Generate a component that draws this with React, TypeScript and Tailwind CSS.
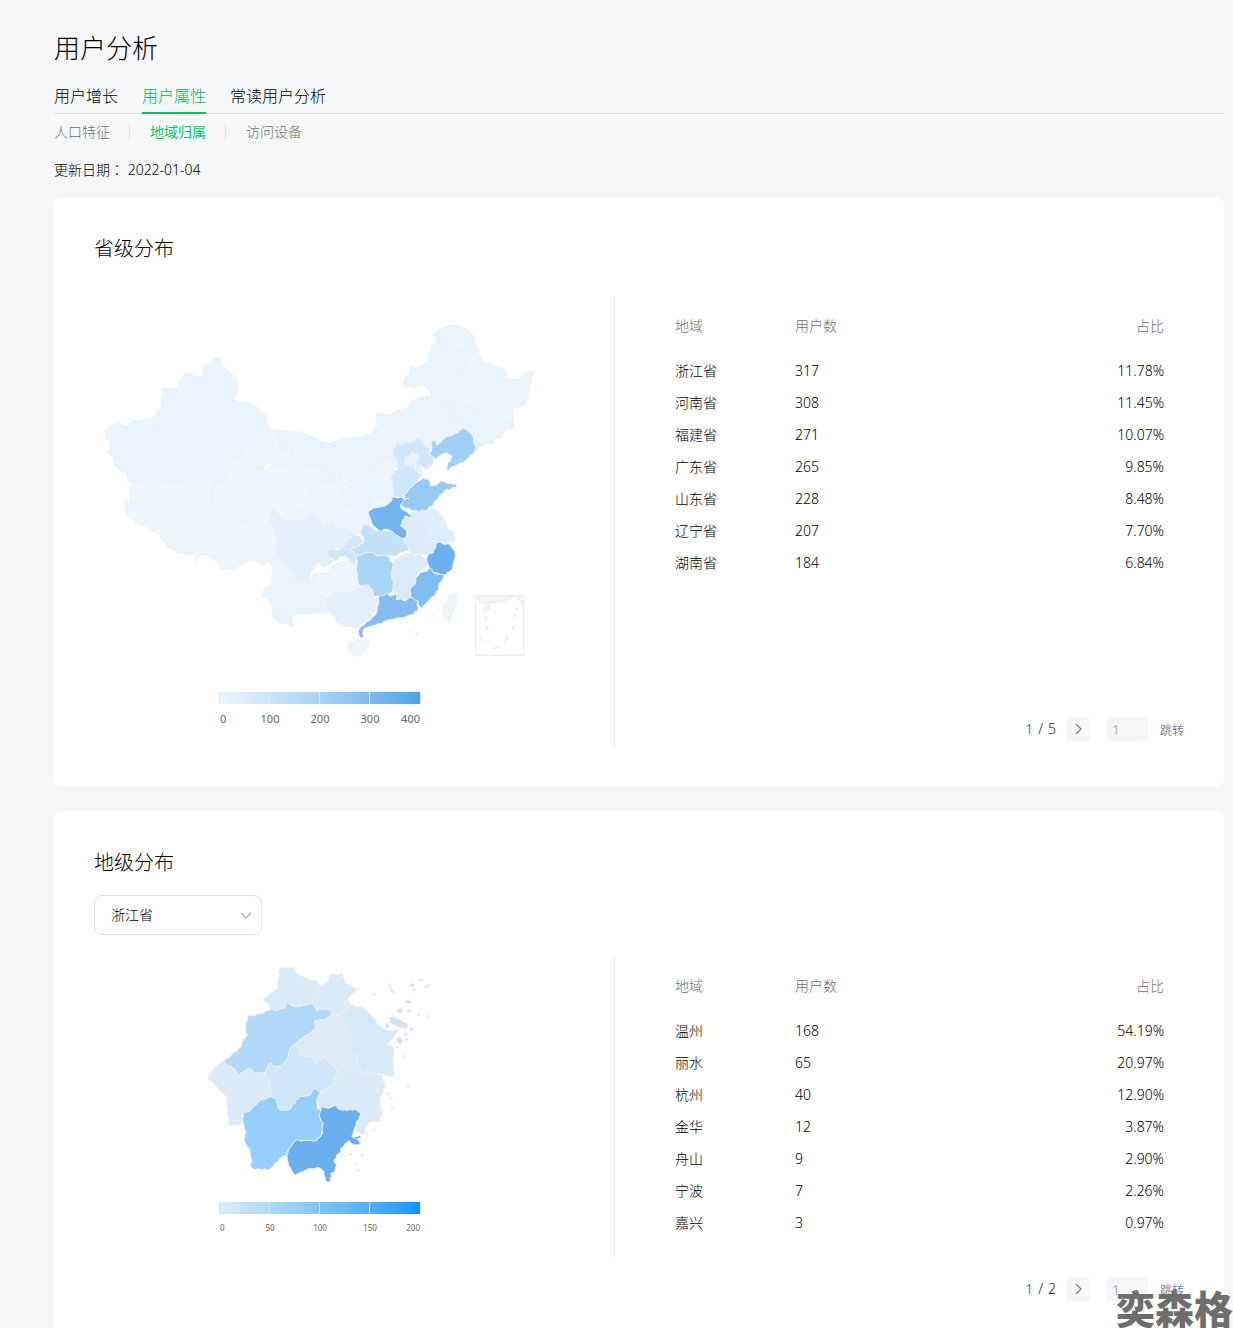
import { useState } from "react";

type Point = [number, number];
type Region = { name: string; fill: string; points: Point[] };

/* ---------- map geometry helpers ---------- */

// Each sheet of the country map is digitised from its own origin.
const SHEETS = {
  W: [0, 90],
  N: [645, 0],
  E: [645, 420],
  C: [435, 330],
} as const;

function trace(text: string): Point[] {
  let dx = 0;
  let dy = 0;
  const out: Point[] = [];
  for (const token of text.trim().split(/\s+/)) {
    if (token in SHEETS) {
      [dx, dy] = SHEETS[token as keyof typeof SHEETS];
    } else {
      const [x, y] = token.split(",").map(Number);
      out.push([x + dx, y + dy]);
    }
  }
  return out;
}

// Adds a small, repeatable irregularity along a border so that neighbours share it.
function borderPath(points: Point[]): string {
  const parts: string[] = [];
  points.forEach((a, i) => {
    const b = points[(i + 1) % points.length];
    const length = Math.hypot(b[0] - a[0], b[1] - a[1]);
    parts.push(`${a[0]},${a[1]}`);
    const steps = Math.min(5, Math.floor(length / 8));
    const forward = a[0] < b[0] || (a[0] === b[0] && a[1] < b[1]);
    const [p, q] = forward ? [a, b] : [b, a];
    const mids: string[] = [];
    for (let k = 1; k < steps; k++) {
      const t = k / steps;
      const seed = Math.sin(p[0] * 12.9 + p[1] * 78.2 + q[0] * 3.7 + k * 37.7) * 43758;
      const shift = (seed - Math.floor(seed) - 0.5) * 6;
      const x = p[0] + (q[0] - p[0]) * t - ((q[1] - p[1]) / length) * shift;
      const y = p[1] + (q[1] - p[1]) * t + ((q[0] - p[0]) / length) * shift;
      mids.push(`${x.toFixed(1)},${y.toFixed(1)}`);
    }
    parts.push(...(forward ? mids : mids.reverse()));
  });
  return `M${parts.join("L")}Z`;
}

const region = (name: string, fill: string, text: string): Region => ({ name, fill, points: trace(text) });

const CHINA: Region[] = [
  region("内蒙古", "#e8f3fc", "C 108,27 150,33 182,33 205,45 240,60 265,68 285,62 310,52 345,48 370,48 390,40 400,30 N 205,345 198,325 203,308 215,306 235,313 262,297 290,294 305,272 335,258 368,256 362,243 345,225 325,220 320,230 300,225 285,227 281,216 303,167 325,170 352,150 357,127 378,90 368,72 385,55 395,62 400,77 420,88 430,110 440,115 470,103 485,120 472,160 462,185 463,205 440,220 420,237 440,262 435,270 410,280 420,300 420,325 440,320 455,345 460,352 445,365 430,370 400,385 380,403 372,388 365,390 362,410 345,405 335,385 325,380 312,392 290,395 270,405 262,393 250,415 250,435 C 465,108 430,118 400,140 385,145 360,165 345,185 322,178 295,172 302,140 290,140 280,180 262,187 250,183 232,160 W 680,375 655,375 625,385 590,350 595,322 560,325 550,300 548,270"),
  region("甘肃省", "#eaf5fe", "W 525,262 548,270 550,300 560,325 595,322 590,350 625,385 655,375 680,375 C 232,160 250,183 262,187 280,180 315,185 340,205 343,220 330,252 295,252 298,262 285,285 270,315 248,318 238,300 210,275 190,300 170,300 150,290 150,150 90,125 W 500,385 475,375 450,362 430,354 438,340 442,322 455,315 475,300 495,290 518,283"),
  region("新疆", "#e9f4fe", "W 28,268 38,265 43,255 65,245 78,247 82,255 95,255 110,240 130,240 150,235 182,227 188,208 201,195 202,152 197,146 235,142 248,147 250,130 262,112 272,94 285,101 310,107 323,104 325,75 335,68 352,66 358,51 377,54 377,68 395,90 410,97 422,110 429,130 428,152 418,165 420,178 440,185 470,190 490,202 508,218 515,243 525,262 518,283 495,290 475,300 455,315 442,322 438,340 430,354 405,360 380,366 385,385 394,402 385,415 385,430 360,428 340,415 305,412 280,417 260,423 235,425 205,420 200,412 180,413 152,410 135,425 115,431 100,420 97,395 80,390 60,375 57,352 45,338 35,334 46,328 46,297 30,292"),
  region("西藏", "#edf5fd", "W 115,431 135,425 152,410 180,413 200,412 205,420 235,425 260,423 280,417 305,412 340,415 360,428 350,440 352,470 348,490 362,508 400,526 435,540 465,550 485,567 510,560 520,548 535,560 545,590 547,620 545,650 530,665 520,660 503,672 485,660 465,657 440,670 415,685 378,684 375,668 365,665 360,652 340,642 315,642 303,662 303,642 270,640 240,632 215,610 200,590 175,570 150,550 137,556 115,535 95,520 88,480 95,475 105,483 108,455 103,435"),
  region("青海省", "#edf5fd", "W 380,366 405,360 430,354 450,362 475,375 500,385 520,385 530,368 550,375 565,370 600,385 630,410 645,430 651,460 640,485 625,500 635,512 620,515 600,505 605,520 620,525 605,535 600,550 575,545 560,540 545,515 530,505 525,525 520,548 510,560 485,567 465,550 435,540 400,526 362,508 348,490 352,470 350,440 360,428 385,430 385,415 394,402 385,385"),
  region("宁夏", "#ebf5fe", "C 262,187 280,180 285,155 290,140 302,140 302,160 295,172 315,185 305,205 300,225 320,215 310,250 295,252 298,262 270,240 268,215"),
  region("陕西省", "#eaf4fe", "C 385,145 400,140 395,165 385,190 385,240 382,270 395,300 405,318 370,310 355,340 340,340 325,328 300,322 270,315 285,285 298,262 295,252 330,252 343,220 340,205 315,185 322,178 345,185 360,165"),
  region("山西省", "#e8f4fe", "C 400,140 430,118 465,108 470,125 463,150 455,165 460,190 457,227 455,240 438,253 410,260 384,272 385,240 385,190 395,165"),
  region("四川省", "#e3effb", "C 100,263 110,275 120,288 140,300 160,298 190,300 210,275 238,300 248,318 270,315 300,322 325,328 340,340 330,360 305,380 270,385 262,400 280,420 270,430 250,440 235,425 215,450 210,480 180,487 165,475 150,440 130,420 108,408 113,370 105,330 85,310 90,285"),
  region("云南省", "#e8f3fc", "C 95,415 108,408 130,420 150,440 165,475 180,487 210,480 225,455 235,465 218,475 235,490 230,510 245,525 265,540 258,555 270,575 250,572 235,575 215,578 190,580 160,580 155,595 160,615 150,612 135,605 118,607 100,590 98,560 80,530 65,530 70,510 95,485 98,450"),
  region("贵州省", "#eaf5fe", "C 235,490 218,475 225,460 260,455 270,445 285,428 300,425 320,418 340,420 350,440 352,470 355,490 370,495 340,508 320,520 300,512 280,518 265,530 245,525 230,510"),
  region("广西", "#e3f0fc", "C 245,525 265,530 280,518 300,512 320,520 340,508 370,495 392,490 398,505 400,528 412,535 410,560 395,585 375,605 355,618 320,617 290,605 280,585 270,575 258,555 265,540"),
  region("重庆市", "#cfe6fb", "C 340,340 360,345 370,360 345,378 332,385 350,400 345,435 330,420 320,405 305,405 285,420 262,400 270,385 295,388 310,375 330,355"),
  region("湖北省", "#c5e1f8", "C 370,310 385,312 400,325 430,330 450,328 465,340 490,350 505,370 505,390 480,395 465,405 440,405 410,405 395,393 375,395 350,405 345,398 332,385 345,378 370,365 372,350 362,340"),
  region("安徽省", "#dbebfa", "E 285,200 300,190 305,183 325,185 330,195 345,205 350,225 362,235 355,265 382,275 370,300 355,310 330,310 300,308 295,290 280,265 292,255 290,240 272,225 275,205"),
  region("江苏省", "#dcedfb", "E 305,178 325,172 345,182 365,175 380,178 395,195 405,210 415,235 430,245 432,258 415,260 412,275 385,275 355,268 350,255 362,235 350,225 345,205 330,195"),
  region("上海市", "#e3effb", "E 415,258 430,250 435,265 430,275 415,275"),
  region("河北省", "#cfe6fb", "N 262,393 270,405 290,395 312,392 325,380 335,385 345,405 362,410 358,428 372,445 365,465 350,475 335,460 335,490 328,500 E 320,95 300,110 283,130 278,140 247,135 250,110 243,75 N 262,475 262,450 250,435 250,415"),
  region("北京市", "#e6f2fc", "N 290,435 300,432 305,422 325,432 325,448 318,458 302,465 285,462 282,450"),
  region("天津市", "#e6f2fc", "N 315,458 332,465 335,485 325,490 312,475"),
  region("河南省", "#73b5f0", "C 384,272 410,260 438,253 455,240 457,227 490,232 495,240 480,258 497,270 517,285 510,290 495,285 482,315 500,330 500,350 485,352 465,340 450,328 415,328 400,315 392,295"),
  region("湖南省", "#aad4f6", "C 350,405 375,395 395,393 410,405 440,405 462,430 455,455 460,500 455,515 430,525 400,528 398,505 385,490 365,495 355,490 352,470 350,440"),
  region("江西省", "#dbebfa", "C 460,420 480,405 505,398 540,400 555,410 565,430 540,450 525,475 520,500 510,520 505,535 480,535 465,520 460,500 455,455 462,430"),
  region("山东省", "#96c9f3", "E 283,130 300,110 320,95 340,82 358,85 362,105 380,103 395,90 415,98 440,98 438,110 410,115 385,140 370,160 345,180 305,178 272,162 280,150 297,142 283,143"),
  region("辽宁省", "#a2cff5", "N 460,352 475,362 490,378 498,415 475,440 465,450 435,465 410,480 412,465 427,435 412,425 395,430 378,445 370,438 358,428 365,410 365,390 372,388 380,403 400,385 430,370 445,365"),
  region("吉林省", "#e8f3fc", "N 435,270 455,270 475,290 510,290 535,305 550,325 570,320 600,335 612,330 612,350 600,355 590,350 570,380 550,385 552,400 535,395 515,405 500,418 490,378 475,362 460,352 455,345 440,320 420,325 420,300 410,280"),
  region("黑龙江省", "#eaf5fe", "N 385,55 400,48 430,42 470,55 490,75 500,110 520,155 550,160 582,178 595,208 625,205 650,185 671,180 665,200 660,240 645,280 605,290 612,330 600,335 570,320 550,325 535,305 510,290 475,290 455,270 440,262 420,237 440,220 463,205 462,185 472,160 485,120 470,103 440,115 430,110 420,88 400,77 395,62"),
  region("广东省", "#83bdf1", "E 205,440 230,428 240,435 262,432 258,447 290,447 300,438 320,445 325,470 322,482 300,492 270,500 240,505 215,518 185,525 160,535 158,550 163,560 150,560 145,540 150,530 165,520 185,500 200,485 205,460"),
  region("福建省", "#81bdf2", "E 300,438 303,410 315,400 318,380 330,365 352,360 358,350 370,365 385,370 402,372 395,390 385,400 387,415 372,435 350,455 330,475 325,450"),
  region("浙江省", "#6db2ef", "E 382,275 390,273 402,280 415,278 435,300 432,330 428,350 405,372 390,370 370,365 358,350 350,325 355,310 370,305"),
  region("海南省", "#eaf5fe", "E 115,590 118,575 145,565 175,567 175,580 155,610 140,615 118,605"),
  region("台湾省", "#eaf5fc", "E 402,460 415,440 432,426 442,430 438,460 425,490 418,515 400,490 398,475"),
];

const ZHEJIANG: Region[] = [
  region("湖州", "#daebf7", "240,55 280,53 290,70 325,90 350,90 360,108 340,140 338,160 300,170 285,170 258,155 255,175 210,182 205,160 188,150 215,130 232,115 235,90"),
  region("嘉兴", "#daebf7", "360,108 385,95 392,75 428,70 435,98 470,115 465,128 443,145 450,165 440,185 420,192 395,193 395,178 360,178 350,185 338,160 340,140"),
  region("杭州", "#b0daf8", "142,195 165,198 205,182 255,175 258,155 285,170 300,170 338,160 350,185 360,178 395,178 393,195 375,210 345,212 347,240 320,255 285,285 270,295 262,325 250,345 220,350 212,338 208,355 190,370 160,368 148,355 130,365 118,375 105,358 80,345 70,332 90,322 105,305 125,290 130,270 142,255 138,220"),
  region("绍兴", "#dcebf6", "345,212 375,210 395,193 420,192 430,220 445,240 452,262 445,282 460,305 475,310 473,340 440,345 412,358 395,345 372,322 345,340 335,322 300,315 297,295 285,285 320,255 347,240"),
  region("宁波", "#d5e9f7", "420,192 440,185 450,165 485,170 515,198 535,225 560,240 595,243 580,262 560,285 580,290 580,345 582,380 565,378 550,370 520,370 495,365 485,378 473,340 475,310 460,305 445,282 452,262 445,240 430,220"),
  region("金华", "#cfe7f8", "270,295 285,285 297,295 300,315 335,322 345,340 372,322 395,345 412,358 402,400 380,420 360,425 345,415 325,438 300,438 285,460 265,480 235,478 228,447 210,440 210,405 195,370 212,338 220,350 250,345 262,325"),
  region("衢州", "#daebf7", "70,335 80,345 105,358 118,375 130,365 148,355 160,368 190,370 205,385 210,405 210,440 180,450 150,483 127,487 125,525 90,528 83,490 80,440 45,405 25,390 28,370 50,345"),
  region("丽水", "#94d0fb", "127,487 150,483 180,450 210,440 228,447 235,478 265,480 285,460 300,438 325,438 345,415 360,425 355,450 350,475 368,485 358,500 370,520 362,560 350,572 320,570 285,575 262,610 240,625 225,640 205,660 155,655 150,600 133,575 138,545 130,520"),
  region("台州", "#daebf7", "412,358 440,345 473,340 485,378 495,365 520,370 545,372 555,410 540,440 545,480 540,515 510,515 490,552 470,548 470,515 482,490 465,478 425,480 405,465 385,475 360,478 350,460 360,425 380,420 402,400"),
  region("温州", "#69b0ee", "365,470 385,475 405,465 425,480 465,478 482,490 470,515 455,560 480,576 480,584 460,583 448,572 430,590 410,615 402,630 410,645 405,665 392,670 393,695 378,695 372,665 355,652 330,655 310,665 285,675 272,655 262,625 265,600 285,572 320,572 350,572 368,550 370,520 358,500"),
];

const ISLANDS: string[] = [
  "568,202 590,206 623,222 620,235 600,232 575,222",
  "593,180 602,173 608,182 606,188 592,187",
  "614,155 625,150 635,155 625,160",
  "562,218 568,225 562,235 556,228",
  "590,265 600,262 608,270 602,282 592,276",
  "628,235 637,233 638,243 630,242",
  "620,182 632,180 630,187",
  "635,100 642,104 638,112 630,107",
  "567,100 572,118 588,130 574,122",
  "612,250 622,252 618,260",
  "615,268 626,265 620,272",
];

const SPECKS: Point[] = [
  [522, 132], [660, 90], [666, 88], [685, 106], [676, 110], [642, 118], [655, 193], [684, 198], [612, 318],
  [624, 408], [574, 445], [576, 474], [562, 430], [520, 540], [428, 612], [452, 612], [486, 614], [467, 642], [474, 660],
  [590, 292], [580, 200], [604, 212], [498, 550],
];

function RegionShape({ item }: { item: Region }) {
  return (
    <path d={borderPath(item.points)} fill={item.fill} stroke="#eeeff0" strokeWidth={3} strokeLinejoin="round">
      <title>{item.name}</title>
    </path>
  );
}

function ChinaMap() {
  return (
    <svg viewBox="0 0 1380 1050" className="w-[460px] max-w-full" role="img" aria-label="省级分布地图">
      {CHINA.map((r) => (
        <RegionShape key={r.name} item={r} />
      ))}
      <g fill="#dfe3e8">
        <rect x="943" y="960" width="5" height="4" />
        <rect x="964" y="968" width="5" height="5" />
        <rect x="1032" y="892" width="4" height="3" />
        <rect x="1080" y="930" width="3" height="3" />
      </g>
      <g fill="none" stroke="#ededee" strokeWidth={4}>
        <rect x="1142" y="854" width="144" height="179" />
        <path fill="#f4f4f4" d="M1143 855L1154 872L1168 878L1225 870L1260 855ZM1263 855L1272 867L1278 855Z" />
        <path fill="#f4f4f4" d="M1169 886L1182 882L1184 890L1174 900L1166 896Z" />
        <path strokeWidth={6} d="M1170 915l5 14M1180 947l-11 10M1157 979l5 12M1194 1014l17-6M1227 992l14-15M1252 955l8-12M1259 923v-15M1261 899l7-10M1275 877l8-9" />
      </g>
    </svg>
  );
}

function ZhejiangMap() {
  return (
    <svg viewBox="0 21 720 714" className="w-[240px] max-w-full" role="img" aria-label="地级分布地图">
      {ZHEJIANG.map((r) => (
        <RegionShape key={r.name} item={r} />
      ))}
      <g fill="#cfe4f3" stroke="#e6eaed" strokeWidth={3} strokeLinejoin="round">
        {ISLANDS.map((d) => (
          <path key={d} d={borderPath(trace(d))} />
        ))}
      </g>
      <path d="M463 562L480 558L484 562L468 567Z" fill="#69b0ee" />
      <g fill="#e6eaed">
        {SPECKS.map(([x, y]) => (
          <path key={`${x}-${y}`} d={`M${x - 4} ${y}l4-4l5 3l-1 5l-6 1z`} />
        ))}
      </g>
    </svg>
  );
}

/* ---------- page pieces ---------- */

function Legend({ labels, bar, text }: { labels: string[]; bar: string; text: string }) {
  return (
    <div className="w-[202px]">
      <div className={`grid h-3 grid-cols-4 divide-x divide-[#dcebf6] border-x border-[#e3e6e8] ${bar}`}>
        <span />
        <span />
        <span />
        <span />
      </div>
      <div className={`grid grid-cols-[1fr_2fr_2fr_2fr_1fr] px-px text-center font-normal text-[#666] ${text}`}>
        {labels.map((l) => (
          <span key={l} className="first:text-left last:text-right">
            {l}
          </span>
        ))}
      </div>
    </div>
  );
}

type Row = [string, string, string];

function RegionTable({ rows, label }: { rows: Row[]; label: string }) {
  return (
    <table className="w-full table-fixed text-left text-sm leading-8" aria-label={label}>
      <thead className="text-[#6f7072]">
        <tr>
          <th className="w-[120px] py-[13px] font-light">地域</th>
          <th className="py-[13px] font-light">用户数</th>
          <th className="py-[13px] text-right font-light">占比</th>
        </tr>
      </thead>
      <tbody>
        {rows.map(([name, count, share]) => (
          <tr key={name}>
            <td className="p-0">{name}</td>
            <td className="p-0">{count}</td>
            <td className="p-0 text-right">{share}</td>
          </tr>
        ))}
      </tbody>
    </table>
  );
}

function Pager({ total }: { total: number }) {
  const [page, setPage] = useState("");
  return (
    <form className="flex h-6 items-center justify-end text-sm" onSubmit={(e) => e.preventDefault()}>
      <span className="mr-2.5 flex gap-[5px] text-[#1b1c1e]">
        <span className="font-normal text-[#07c160]">1</span>
        <span>/</span>
        <span>{total}</span>
      </span>
      <button type="button" aria-label="下一页" className="mr-4 flex size-6 items-center justify-center rounded-sm bg-[#f5f7f9]">
        <svg viewBox="0 0 12 12" className="size-3" fill="none" stroke="#7d7e80" strokeWidth="1.2">
          <path d="M4 1L9 6L4 11" />
        </svg>
      </button>
      <input
        aria-label="页码"
        value={page}
        onChange={(e) => setPage(e.target.value)}
        placeholder="1"
        className="mr-3 h-6 w-[42px] rounded-sm bg-[#f5f7f9] px-1.5 font-normal placeholder:text-[#b0b1b3]"
      />
      <button type="submit" className="pt-1 text-xs text-[#3a4f7d]">
        跳转
      </button>
    </form>
  );
}

const PROVINCES: Row[] = [
  ["浙江省", "317", "11.78%"],
  ["河南省", "308", "11.45%"],
  ["福建省", "271", "10.07%"],
  ["广东省", "265", "9.85%"],
  ["山东省", "228", "8.48%"],
  ["辽宁省", "207", "7.70%"],
  ["湖南省", "184", "6.84%"],
];

const CITIES: Row[] = [
  ["温州", "168", "54.19%"],
  ["丽水", "65", "20.97%"],
  ["杭州", "40", "12.90%"],
  ["金华", "12", "3.87%"],
  ["舟山", "9", "2.90%"],
  ["宁波", "7", "2.26%"],
  ["嘉兴", "3", "0.97%"],
];

export default function App() {
  return (
    <div className="relative flex min-h-screen flex-col bg-[#f5f7f9] pr-[9px] pl-[54px] font-['Noto_Sans','Noto_Sans_CJK_SC',sans-serif] font-light text-black">
      <h1 className="pt-7 text-[26px] leading-10">用户分析</h1>

      <nav aria-label="用户分析" className="mt-3 flex gap-6 border-b border-[#e0e1e3] text-base leading-8">
        <a href="#growth">用户增长</a>
        <a href="#attributes" aria-current="page" className="-mb-px border-b-2 border-[#07c160] text-[#00b552]">
          用户属性
        </a>
        <a href="#readers">常读用户分析</a>
      </nav>
      <nav aria-label="用户属性" className="flex items-center pt-2 text-sm leading-5 text-[#6f7072]">
        <a href="#people">人口特征</a>
        <span className="mr-5 ml-[19px] h-3.5 w-px bg-[#dcdddf]" />
        <a href="#area" aria-current="page" className="font-normal text-[#07c160]">
          地域归属
        </a>
        <span className="mr-5 ml-[19px] h-3.5 w-px bg-[#dcdddf]" />
        <a href="#devices">访问设备</a>
      </nav>
      <p className="mt-4 text-sm leading-6">
        更新日期<span className="font-['Noto_Sans_CJK_TC',sans-serif] leading-none">：</span> 2022-01-04
      </p>

      <main className="mt-[15px] flex flex-1 flex-col gap-6">
        <section className="rounded-lg bg-white p-10">
          <h2 className="text-xl leading-6">省级分布</h2>
          <div className="mt-9 grid grid-cols-[521fr_569fr]">
            <div className="flex flex-col items-center border-r border-[#e6e7e9] pt-3.5 pb-[19px]">
              <div className="mr-[58px]">
                <ChinaMap />
              </div>
              <div className="mt-[31px] mr-[68px]">
                <Legend
                  labels={["0", "100", "200", "300", "400"]}
                  bar="bg-linear-to-r from-[#ecf6fe] via-[#a8d3f6] to-[#4da4ea]"
                  text="pt-1.5 text-[11px] leading-[18px]"
                />
              </div>
            </div>
            <div className="flex flex-col justify-between pb-1.5 pl-[60px]">
              <div className="pr-5">
                <RegionTable rows={PROVINCES} label="省级分布" />
              </div>
              <Pager total={5} />
            </div>
          </div>
        </section>

        <section className="flex-1 rounded-t-lg bg-white px-10 pt-10 pb-6">
          <h2 className="text-xl leading-6">地级分布</h2>
          <div className="relative mt-5 w-[168px]">
            <select
              aria-label="选择省份"
              defaultValue="浙江省"
              className="h-10 w-full appearance-none rounded-lg border border-[#e0e1e3] bg-white px-4 text-sm"
            >
              {PROVINCES.map(([name]) => (
                <option key={name}>{name}</option>
              ))}
            </select>
            <svg
              viewBox="0 0 12 12"
              className="pointer-events-none absolute top-3.5 right-2.5 size-3"
              fill="none"
              stroke="#a5a6a8"
              strokeWidth="1.2"
            >
              <path d="M1 4L6 9L11 4" />
            </svg>
          </div>
          <div className="mt-[22px] grid grid-cols-[521fr_569fr]">
            <div className="flex h-[300px] flex-col items-center border-r border-[#e6e7e9]">
              <div className="mr-[68px]">
                <ZhejiangMap />
              </div>
              <div className="mt-[7px] mr-[68px]">
                <Legend
                  labels={["0", "50", "100", "150", "200"]}
                  bar="bg-linear-to-r from-[#daebf7] via-[#7cc6fb] to-[#0095ff]"
                  text="pt-1.5 text-[8px] leading-4"
                />
              </div>
            </div>
            <div className="pr-5 pl-[60px]">
              <RegionTable rows={CITIES} label="地级分布" />
            </div>
          </div>
          <div className="mt-5">
            <Pager total={2} />
          </div>
        </section>
      </main>

      <span className="pointer-events-none absolute right-0 bottom-0 font-['Noto_Sans_CJK_SC',sans-serif] text-[39px] leading-[42px] font-black text-[#6e6e6e]">
        奕森格
      </span>
    </div>
  );
}
